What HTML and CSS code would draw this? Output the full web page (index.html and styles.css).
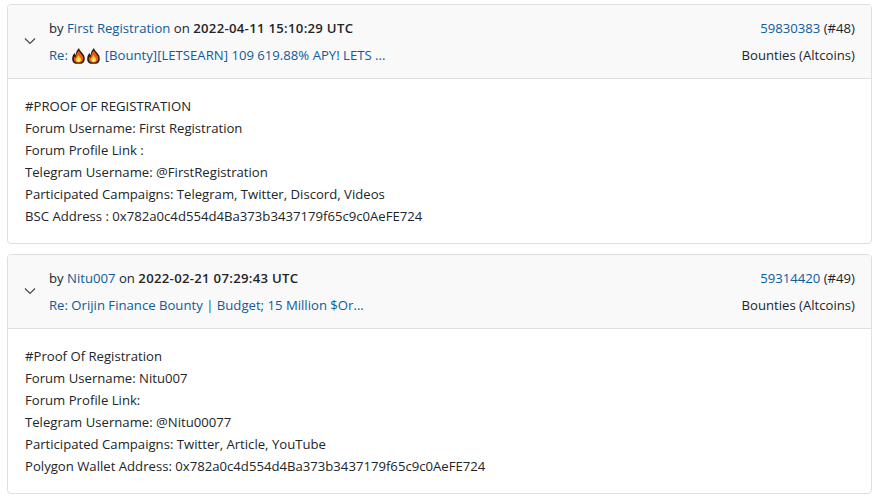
FILE: index.html
```html
<!DOCTYPE html>
<html lang="en">
<head>
<meta charset="utf-8">
<title>Posts</title>
<link rel="stylesheet" href="styles.css">
</head>
<body>
<svg class="defs" width="0" height="0" aria-hidden="true">
  <defs>
    <symbol id="fire" viewBox="0 0 14 17">
      <path d="M7.500 0C8 3 11.500 5 13 8c1.400 3.200 .8 6.500-1.300 8C10 17.200 4 17.300 2.200 16 -.2 14.300-.3 10.500 1 7.800 1.500 6.800 2.200 5.800 3 5c0 1 .3 2 1 2.500C4 5 5.500 2 7.500 0Z" fill="#2e1a10"/>
      <path d="M7.400 2.500c.5 2.200 3.400 4 4.300 6.500 .9 2.400 .4 4.800-1.300 6-1.600 .9-5.200 .9-6.800 0-1.800-1.200-2-3.900-1.200-6 .3 .6 .8 1.200 1.500 1.300C3.900 7.500 5.600 4.800 7.400 2.500Z" fill="#ec5a12"/>
      <path d="M7 7.500c.4 1.300 2.600 2.600 2.900 4.500 .2 1.500-.6 2.900-2.900 3-2.200 0-3.200-1.400-2.900-2.900C4.400 10.400 6.400 9.200 7 7.500Z" fill="#ffc81e"/>
      <path d="M7 11c.3 .8 1.300 1.400 1.300 2.400 0 .9-.6 1.300-1.400 1.300-.8 0-1.300-.5-1.300-1.300 0-1 1.100-1.600 1.400-2.400Z" fill="#fff3b0"/>
    </symbol>
  </defs>
</svg>
<main class="list">
  <article class="card">
    <header class="head">
      <svg class="chev" width="12" height="8" viewBox="0 0 12 8"><path d="M1 1.500 6 6.500 11 1.500" fill="none" stroke="#444" stroke-width="1.100"/></svg>
      <div class="meta">
        <div class="row">by <a href="#">First Registration</a> on <b>2022-04-11 15:10:29 UTC</b></div>
        <div class="row"><a href="#">Re: <svg class="fire" width="13" height="16"><use href="#fire"/></svg><svg class="fire" width="13" height="16"><use href="#fire"/></svg> [Bounty][LETSEARN] 109 619.88% APY! LETS ...</a></div>
      </div>
      <div class="side">
        <div class="row"><a href="#">59830383</a> (#48)</div>
        <div class="row">Bounties (Altcoins)</div>
      </div>
    </header>
    <div class="body">
      <p>#PROOF OF REGISTRATION</p>
      <p>Forum Username: First Registration</p>
      <p>Forum Profile Link :</p>
      <p>Telegram Username: @FirstRegistration</p>
      <p>Participated Campaigns: Telegram, Twitter, Discord, Videos</p>
      <p>BSC Address : 0x782a0c4d554d4Ba373b3437179f65c9c0AeFE724</p>
    </div>
  </article>
  <article class="card">
    <header class="head">
      <svg class="chev" width="12" height="8" viewBox="0 0 12 8"><path d="M1 1.500 6 6.500 11 1.500" fill="none" stroke="#444" stroke-width="1.100"/></svg>
      <div class="meta">
        <div class="row">by <a href="#">Nitu007</a> on <b>2022-02-21 07:29:43 UTC</b></div>
        <div class="row"><a href="#">Re: Orijin Finance Bounty | Budget; 15 Million $Or...</a></div>
      </div>
      <div class="side">
        <div class="row"><a href="#">59314420</a> (#49)</div>
        <div class="row">Bounties (Altcoins)</div>
      </div>
    </header>
    <div class="body">
      <p>#Proof Of Registration</p>
      <p>Forum Username: Nitu007</p>
      <p>Forum Profile Link:</p>
      <p>Telegram Username: @Nitu00077</p>
      <p>Participated Campaigns: Twitter, Article, YouTube</p>
      <p>Polygon Wallet Address: 0x782a0c4d554d4Ba373b3437179f65c9c0AeFE724</p>
    </div>
  </article>
</main>
</body>
</html>
```
FILE: styles.css
```css
* { box-sizing: border-box; }
html, body { margin: 0; background: #fff; }
body {
  font-family: "Open Sans", "Noto Sans", sans-serif;
  font-size: 13.15px;
  line-height: 22px;
  color: #212529;
  overflow: hidden;
}
.defs { position: absolute; }
.list {
  display: flex;
  flex-direction: column;
  gap: 10px;
  padding: 4px 8px 0 7px;
}
.card {
  border: 1px solid #dfdfdf;
  border-radius: 4px;
  overflow: hidden;
  height: 240px;
}
.head {
  display: flex;
  align-items: center;
  height: 74px;
  padding: 0 16px 0 15px;
  background: #f9f9f9;
  border-bottom: 1px solid #dfdfdf;
}
.chev { flex: none; margin: 0 13px 2px 1px; }
.meta { flex: 1; }
.row { line-height: 27px; }
.side { text-align: right; }
a { color: #0f5b9c; text-decoration: none; }
b { font-weight: 600; letter-spacing: .3px; }
.fire { vertical-align: -4px; margin: 0 1px; }
.body { padding: 16px 17px; }
.body p { margin: 0; }
```
